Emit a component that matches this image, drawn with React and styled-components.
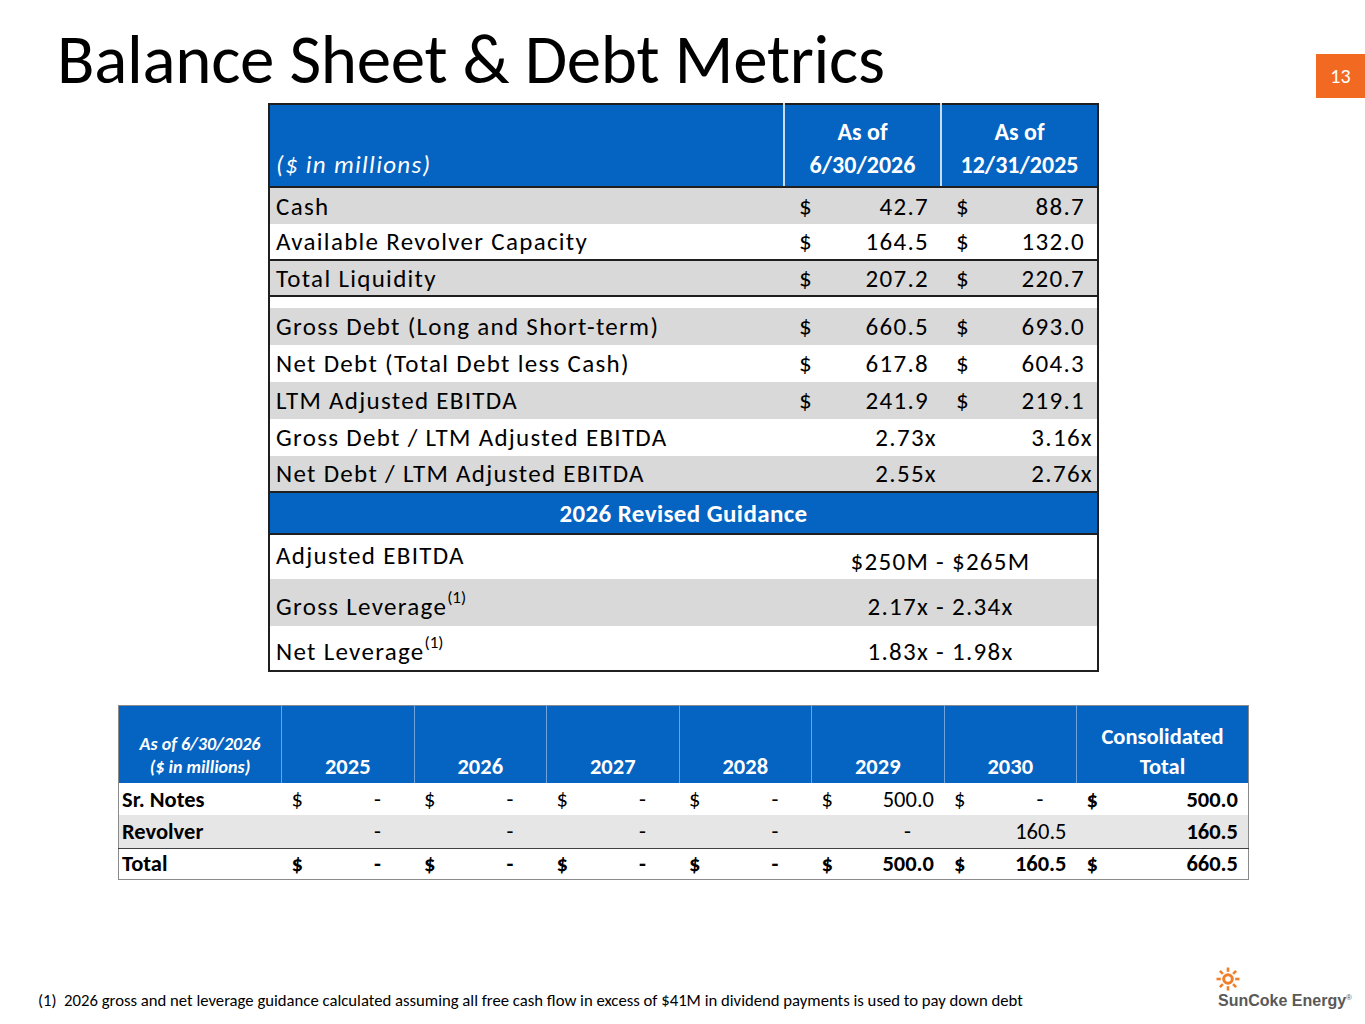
import styled, { createGlobalStyle } from 'styled-components';

const GlobalStyle = createGlobalStyle`
    body {
        margin: 0;
        background: #fff;
        font-family: Calibri, Carlito, Lato, "Liberation Sans", sans-serif;
        color: #000;
    }
`;

const Page = styled.div`
    width: 1365px;
    height: 1024px;
    display: flex;
    flex-direction: column;
    overflow: hidden;
`;

const Header = styled.header`
    display: flex;
    align-items: flex-start;
    height: 103px;
`;

const Title = styled.h1`
    margin: 0;
    padding: 24px 0 0 57px;
    font-size: 69px;
    font-weight: 400;
    line-height: 72px;
    letter-spacing: -0.3px;
`;

const PageNo = styled.div`
    margin: 54px 0 0 auto;
    width: 49px;
    height: 44px;
    background: #f26a21;
    color: #fff;
    font-size: 20px;
    display: flex;
    align-items: center;
    justify-content: center;
`;

/* ---------- top table ---------- */

const Sheet = styled.table`
    margin-left: 268px;
    width: 829px;
    border-collapse: collapse;
    table-layout: fixed;
    border: 2px solid #1f1f1f;
    font-size: 25px;
    letter-spacing: 1.3px;
`;

const HeadCell = styled.th`
    background: #0563c1;
    color: #fff;
    height: 76px;
    padding: 0 6px 5px;
    vertical-align: bottom;
    line-height: 33px;
    font-weight: ${p => p.$label ? 400 : 700};
    font-style: ${p => p.$label ? 'italic' : 'normal'};
    font-size: ${p => p.$label ? 25 : 24}px;
    letter-spacing: ${p => p.$label ? 1.3 : 0}px;
    text-align: ${p => p.$label ? 'left' : 'center'};
    border-left: ${p => p.$label ? 'none' : '2px solid #c9dcf2'};
    border-bottom: 2px solid #1f1f1f;
`;

const Row = styled.tr`
    height: ${p => p.$h || 37}px;
    background: ${p => p.$shade ? '#d9d9d9' : '#fff'};
    border-top: ${p => p.$rule ? '2px solid #1f1f1f' : 'none'};
`;

const Label = styled.td`
    padding: 0 4px 0 6px;
    white-space: nowrap;
    vertical-align: ${p => p.$align || 'middle'};
    padding-top: ${p => p.$top || 0}px;
`;

const Amount = styled.td`
    padding: 0 ${p => p.$pr ?? 12}px 0 15px;
`;

const Money = styled.span`
    display: flex;
    justify-content: space-between;
`;

const Ratio = styled.td`
    text-align: right;
    padding: 0 ${p => p.$pr ?? 4}px 0 0;
`;

const BandCell = styled.td`
    background: #0563c1;
    color: #fff;
    font-weight: 700;
    font-size: 25px;
    letter-spacing: 0.4px;
    text-align: center;
    height: 40px;
    padding: 0;
    border-top: 2px solid #1f1f1f;
    border-bottom: 2px solid #1f1f1f;
`;

const Guide = styled.td`
    text-align: center;
    vertical-align: ${p => p.$align || 'middle'};
    padding-top: ${p => p.$top || 0}px;
`;

const Sup = styled.sup`
    font-size: 17px;
    line-height: 0;
    letter-spacing: 0;
    vertical-align: 12px;
`;

/* ---------- maturity table ---------- */

const Schedule = styled.table`
    margin: 33px 0 0 118px;
    width: 1130px;
    border-collapse: collapse;
    table-layout: fixed;
    border: 1px solid #8a8a8a;
    font-size: 22.5px;
`;

const YearHead = styled.th`
    background: #0563c1;
    color: #fff;
    height: 73px;
    padding: 0 4px 1px;
    vertical-align: bottom;
    font-weight: 700;
    line-height: 30px;
    border-left: 1px solid #6fa3dc;
`;

const CornerHead = styled(YearHead)`
    font-style: italic;
    font-size: 18px;
    line-height: 23px;
    border-left: none;
    padding-bottom: 4px;
`;

const SRow = styled.tr`
    height: ${p => p.$h || 32}px;
    background: ${p => p.$shade ? '#e7e6e6' : '#fff'};
    border-top: ${p => p.$rule ? '1px solid #404040' : 'none'};
`;

const SLabel = styled.td`
    padding-left: 3px;
    font-weight: 700;
`;

const SCell = styled.td`
    padding: 0 10px;
    font-weight: ${p => p.$bold ? 700 : 400};
`;

const Dash = styled.span`
    padding-right: 23px;
`;

/* ---------- footer ---------- */

const Footer = styled.footer`
    margin-top: auto;
    display: flex;
    align-items: flex-end;
    justify-content: space-between;
    padding: 0 13px 14px 38px;
`;

const Note = styled.p`
    margin: 0;
    font-size: 16.7px;
    line-height: 20px;
`;

const Logo = styled.div`
    display: flex;
    flex-direction: column;
    align-items: flex-start;
    gap: 1px;
`;

const LogoText = styled.span`
    font-family: "Liberation Sans", Arial, sans-serif;
    font-weight: 700;
    font-size: 16px;
    color: #595959;
    margin-left: 4px;
    & sup { font-size: 8px; font-weight: 400; }
`;

const Sun = () => (
    <svg width="24" height="24" viewBox="0 0 24 24" style={{marginLeft: 2}}>
        <circle cx="12" cy="12" r="4.3" fill="none" stroke="#f07f2a" strokeWidth="3" />
        {[0, 45, 90, 135, 180, 225, 270, 315].map(a => (
            <line key={a} x1="12" y1="4.8" x2="12" y2="0.5" stroke="#f07f2a" strokeWidth="2.6"
                transform={`rotate(${a} 12 12)`} />
        ))}
    </svg>
);

const liquidity = [
    { label: 'Cash', a: '42.7', b: '88.7', shade: true },
    { label: 'Available Revolver Capacity', a: '164.5', b: '132.0', h: 36 },
    { label: 'Total Liquidity', a: '207.2', b: '220.7', shade: true, rule: true, h: 36 },
];

const debt = [
    { label: 'Gross Debt (Long and Short-term)', a: '660.5', b: '693.0', shade: true },
    { label: 'Net Debt (Total Debt less Cash)', a: '617.8', b: '604.3' },
    { label: 'LTM Adjusted EBITDA', a: '241.9', b: '219.1', shade: true },
];

const ratios = [
    { label: 'Gross Debt /  LTM Adjusted EBITDA', a: '2.73x', b: '3.16x' },
    { label: 'Net Debt / LTM Adjusted EBITDA', a: '2.55x', b: '2.76x', shade: true, h: 36 },
];

const years = ['2025', '2026', '2027', '2028', '2029', '2030'];

const maturities = [
    { label: 'Sr. Notes', sign: true, vals: ['-', '-', '-', '-', '500.0', '-'], total: '500.0' },
    { label: 'Revolver', sign: false, vals: ['-', '-', '-', '-', '-', '160.5'], total: '160.5', shade: true, h: 33 },
    { label: 'Total', sign: true, bold: true, vals: ['-', '-', '-', '-', '500.0', '160.5'], total: '660.5', rule: true, h: 31 },
];

function MoneyCell({ sign, value, bold }){
    return(
        <SCell $bold={bold}>
            <Money>
                <span>{sign ? '$' : ''}</span>
                {value == '-' ? <Dash>-</Dash> : <span>{value}</span>}
            </Money>
        </SCell>
    )
}

function App(){
    return(
        <Page>
            <GlobalStyle/>
            <Header>
                <Title>Balance Sheet &amp; Debt Metrics</Title>
                <PageNo>13</PageNo>
            </Header>

            <Sheet>
                <colgroup>
                    <col style={{width: 515}}/>
                    <col style={{width: 157}}/>
                    <col style={{width: 157}}/>
                </colgroup>
                <thead>
                    <tr>
                        <HeadCell $label>($ in millions)</HeadCell>
                        <HeadCell>As of<br/>6/30/2026</HeadCell>
                        <HeadCell>As of<br/>12/31/2025</HeadCell>
                    </tr>
                </thead>
                <tbody>
                    {liquidity.map(r => (
                        <Row key={r.label} $shade={r.shade} $rule={r.rule} $h={r.h}>
                            <Label>{r.label}</Label>
                            <Amount><Money><span>$</span><span>{r.a}</span></Money></Amount>
                            <Amount><Money><span>$</span><span>{r.b}</span></Money></Amount>
                        </Row>
                    ))}
                    <Row $rule $h={12}><td colSpan={3}></td></Row>
                    {debt.map(r => (
                        <Row key={r.label} $shade={r.shade}>
                            <Label>{r.label}</Label>
                            <Amount><Money><span>$</span><span>{r.a}</span></Money></Amount>
                            <Amount><Money><span>$</span><span>{r.b}</span></Money></Amount>
                        </Row>
                    ))}
                    {ratios.map(r => (
                        <Row key={r.label} $shade={r.shade} $h={r.h}>
                            <Label>{r.label}</Label>
                            <Ratio>{r.a}</Ratio>
                            <Ratio>{r.b}</Ratio>
                        </Row>
                    ))}
                    <tr><BandCell colSpan={3}>2026 Revised Guidance</BandCell></tr>
                    <Row $h={45}>
                        <Label $align="top" $top={5}>Adjusted EBITDA</Label>
                        <Guide colSpan={2} $align="top" $top={11}>$250M - $265M</Guide>
                    </Row>
                    <Row $h={47} $shade>
                        <Label $align="top" $top={12}>Gross Leverage<Sup>(1)</Sup></Label>
                        <Guide colSpan={2} $align="top" $top={12}>2.17x - 2.34x</Guide>
                    </Row>
                    <Row $h={45}>
                        <Label $align="top" $top={10}>Net Leverage<Sup>(1)</Sup></Label>
                        <Guide colSpan={2} $align="top" $top={10}>1.83x - 1.98x</Guide>
                    </Row>
                </tbody>
            </Sheet>

            <Schedule>
                <colgroup>
                    <col style={{width: 163}}/>
                    {years.map(y => <col key={y} style={{width: 132.5}}/>)}
                    <col style={{width: 172}}/>
                </colgroup>
                <thead>
                    <tr>
                        <CornerHead>As of 6/30/2026<br/>($ in millions)</CornerHead>
                        {years.map(y => <YearHead key={y}>{y}</YearHead>)}
                        <YearHead>Consolidated<br/>Total</YearHead>
                    </tr>
                </thead>
                <tbody>
                    {maturities.map(r => (
                        <SRow key={r.label} $shade={r.shade} $rule={r.rule} $h={r.h}>
                            <SLabel>{r.label}</SLabel>
                            {r.vals.map((v, i) => <MoneyCell key={i} sign={r.sign} value={v} bold={r.bold}/>)}
                            <MoneyCell sign={r.sign} value={r.total} bold/>
                        </SRow>
                    ))}
                </tbody>
            </Schedule>

            <Footer>
                <Note>(1)&nbsp; 2026 gross and net leverage guidance calculated assuming all free cash flow in excess of $41M in dividend payments is used to pay down debt</Note>
                <Logo>
                    <Sun/>
                    <LogoText>SunCoke Energy<sup>®</sup></LogoText>
                </Logo>
            </Footer>
        </Page>
    )
};

export default App;
